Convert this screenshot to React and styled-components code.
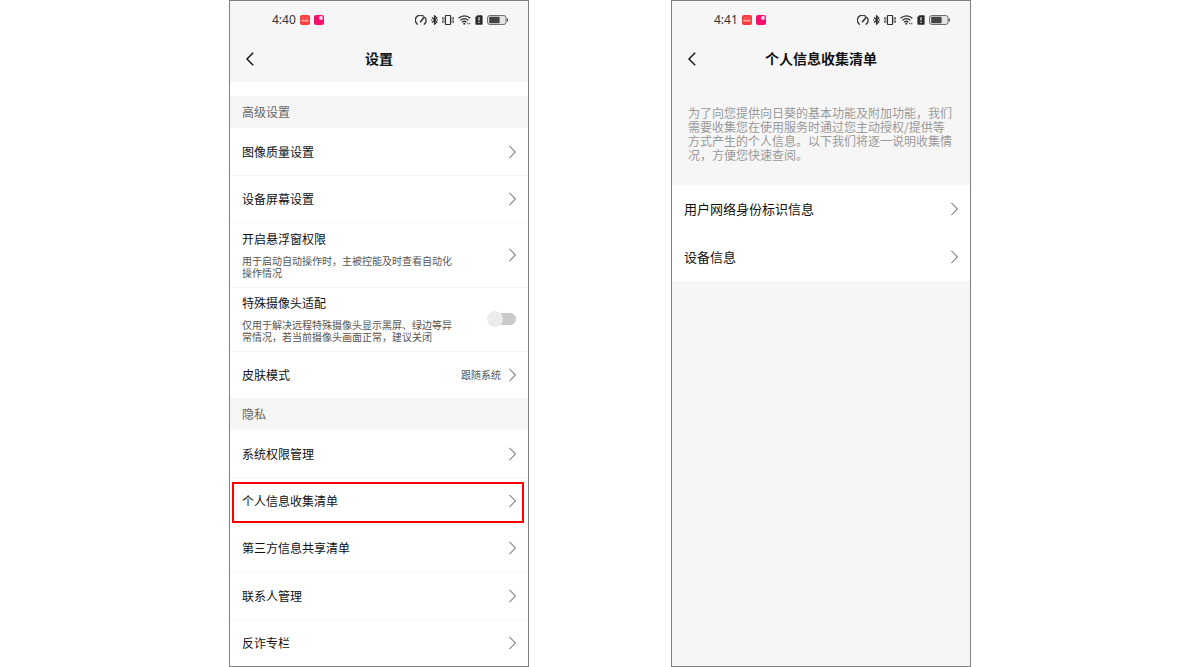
import React, { useState } from "react";
import styled, { createGlobalStyle } from "styled-components";

const advanced = [
  { title: "图像质量设置" },
  { title: "设备屏幕设置" },
  {
    title: "开启悬浮窗权限",
    desc: ["用于启动自动操作时，主被控能及时查看自动化", "操作情况"],
  },
  {
    title: "特殊摄像头适配",
    desc: [
      "仅用于解决远程特殊摄像头显示黑屏、绿边等异",
      "常情况，若当前摄像头画面正常，建议关闭",
    ],
    toggle: true,
  },
  { title: "皮肤模式", value: "跟随系统" },
];

const privacy = [
  { title: "系统权限管理" },
  { title: "个人信息收集清单", marked: true },
  { title: "第三方信息共享清单" },
  { title: "联系人管理" },
  { title: "反诈专栏" },
];

const notice = [
  "为了向您提供向日葵的基本功能及附加功能，我们",
  "需要收集您在使用服务时通过您主动授权/提供等",
  "方式产生的个人信息。以下我们将逐一说明收集情",
  "况，方便您快速查阅。",
];

//icons
const Chevron = () => (
  <svg width="7" height="14" viewBox="0 0 7 14" fill="none" stroke="#8f8f8f">
    <path d="M0.4 0.8 L6.4 7 L0.4 13.2" strokeWidth="1.2" />
  </svg>
);

const BackIcon = () => (
  <svg width="8" height="14" viewBox="0 0 8 14" fill="none" stroke="#111">
    <path d="M7.2 0.8 L1 7 L7.2 13.2" strokeWidth="1.4" />
  </svg>
);

const AppBadges = () => (
  <>
    <svg width="10" height="10" viewBox="0 0 10 10">
      <rect width="10" height="10" rx="2" fill="#fb3a3c" />
      <path d="M2.2 2.8h2M5.6 2.8h2.2" stroke="#fd8a86" strokeWidth="0.8" />
      <path
        d="M1.2 5.7h7.6"
        stroke="#ffc2be"
        strokeWidth="1.8"
        strokeDasharray="1.6 0.3"
      />
    </svg>
    <svg width="10" height="10" viewBox="0 0 10 10">
      <rect width="10" height="10" rx="2" fill="#f5106e" />
      <circle cx="7" cy="2.9" r="1.9" fill="#fff" />
      <circle cx="7" cy="2.8" r="0.7" fill="#f77fae" />
    </svg>
  </>
);

const SystemIcons = () => (
  <>
    <svg width="12" height="10" viewBox="0 0 12 10" fill="none" stroke="#333">
      <path
        d="M2.4 9.2 A4.9 4.9 0 0 1 8.2 1.1 M10.3 2.9 A4.9 4.9 0 0 1 9.2 9.2"
        strokeWidth="1.3"
        strokeLinecap="round"
      />
      <path d="M5.5 6.8 L9.3 2.2" strokeWidth="1.5" strokeLinecap="round" />
    </svg>
    <svg width="7" height="10" viewBox="0 0 7 10" fill="none" stroke="#2b2b2b">
      <path
        d="M1 2.4 L5.8 7.1 L3.5 9.2 V0.8 L5.8 2.9 L1 7.6"
        strokeWidth="1.2"
      />
      <path d="M0 5h1.2M5.8 5h1.2" strokeWidth="1.2" />
    </svg>
    <svg width="12" height="10" viewBox="0 0 12 10" fill="none" stroke="#333">
      <rect x="3.5" y="0.5" width="5" height="9" rx="0.3" strokeWidth="1.1" />
      <path d="M1.9 1.8v6.4M10.1 1.8v6.4" strokeWidth="0.8" />
      <path d="M0.5 2.6v1.6M0.5 5.6v1.8M11.5 2.6v1.6M11.5 5.6v1.8" />
    </svg>
    <svg width="13" height="10" viewBox="0 0 13 10" fill="none" stroke="#333">
      <path
        d="M0.5 3.3 A8.2 8.2 0 0 1 12.3 3.3 M2.4 5.4 A5.4 5.4 0 0 1 10.4 5.4 M4.2 7.4 A3 3 0 0 1 8.4 7.2"
        strokeWidth="1.3"
      />
      <circle cx="6.3" cy="8.8" r="1" fill="#333" stroke="none" />
      <path d="M9 8.6h1.2M10.8 8.6h1.6" stroke="#777" strokeWidth="1.5" />
    </svg>
    <svg width="8" height="10" viewBox="0 0 8 10">
      <path
        d="M2.4 0.2h4.4a.8.8 0 0 1 .8.8v8a.8.8 0 0 1-.8.8h-5.6a.8.8 0 0 1-.8-.8V2.2z"
        fill="#2b2b2b"
      />
      <path d="M4 2.2v3.4M4 6.8v1.3" stroke="#f4f4f4" strokeWidth="1.2" />
    </svg>
    <svg width="21" height="10" viewBox="0 0 21 10">
      <rect
        x="0.5"
        y="0.5"
        width="18.6"
        height="9"
        rx="2.4"
        fill="#e4e4e4"
        stroke="#6d6d6d"
      />
      <rect x="2.2" y="1.8" width="10.4" height="6.4" rx="0.6" fill="#444" />
      <path d="M20.4 3.4v3.2" stroke="#555" strokeWidth="1.2" />
    </svg>
  </>
);

const PhoneTop = ({ time, title }) => {
  return (
    <Header>
      <StatusBar>
        <Time>{time}</Time>
        <Badges>
          <AppBadges />
        </Badges>
        <Signals>
          <SystemIcons />
        </Signals>
      </StatusBar>
      <NavBar>
        <BackButton type="button" aria-label="返回">
          <BackIcon />
        </BackButton>
        <h1>{title}</h1>
      </NavBar>
    </Header>
  );
};

const Body = ({ title, desc }) => (
  <RowBody>
    <RowTitle>{title}</RowTitle>
    {desc && (
      <RowDesc>
        {desc.map((line) => (
          <span key={line}>{line}</span>
        ))}
      </RowDesc>
    )}
  </RowBody>
);

const SettingRow = ({ item }) => {
  const [on, setOn] = useState(false);

  return (
    <Row $tall={!!item.desc}>
      {item.toggle ? (
        <RowLabel>
          <Body title={item.title} desc={item.desc} />
          <Switch
            type="checkbox"
            checked={on}
            onChange={() => setOn(!on)}
          />
        </RowLabel>
      ) : (
        <RowLink href="#">
          <Body title={item.title} desc={item.desc} />
          {item.value && <RowValue>{item.value}</RowValue>}
          <Chevron />
        </RowLink>
      )}
      {item.marked && <Marker />}
    </Row>
  );
};

const App = () => {
  return (
    <>
      <GlobalStyle />
      <Page lang="zh-CN">
        <Phone>
          <PhoneTop time="4:40" title="设置" />
          <Settings>
            <SectionTitle>高级设置</SectionTitle>
            <List>
              {advanced.map((item) => (
                <SettingRow item={item} key={item.title} />
              ))}
            </List>
            <SectionTitle>隐私</SectionTitle>
            <List>
              {privacy.map((item) => (
                <SettingRow item={item} key={item.title} />
              ))}
            </List>
          </Settings>
        </Phone>
        <Phone>
          <PhoneTop time="4:41" title="个人信息收集清单" />
          <Notice>
            {notice.map((line) => (
              <span key={line}>{line}</span>
            ))}
          </Notice>
          <InfoList>
            <li>
              <InfoLink href="#">
                用户网络身份标识信息
                <Chevron />
              </InfoLink>
            </li>
            <li>
              <InfoLink href="#">
                设备信息
                <Chevron />
              </InfoLink>
            </li>
          </InfoList>
        </Phone>
      </Page>
    </>
  );
};

const GlobalStyle = createGlobalStyle`
  * {
    margin: 0;
    padding: 0;
    box-sizing: border-box;
  }
  body {
    background: white;
    font-family: "Noto Sans CJK SC", sans-serif;
  }
  ul {
    list-style: none;
  }
  a {
    color: inherit;
    text-decoration: none;
  }
  svg {
    display: block;
    flex-shrink: 0;
  }
`;
const Page = styled.main`
  min-height: 100vh;
  display: flex;
  justify-content: center;
  gap: 142px;
`;
const Phone = styled.section`
  flex: 0 1 300px;
  display: flex;
  flex-direction: column;
  background: #f6f6f6;
  border: 1px solid #808080;
`;
const Header = styled.header`
  padding-bottom: 3px;
`;
const StatusBar = styled.div`
  height: 38px;
  display: flex;
  align-items: center;
  padding: 0 20px 0 42px;
`;
const Time = styled.span`
  font-family: "Noto Sans", sans-serif;
  font-size: 12px;
  line-height: 16px;
  color: #333;
`;
const Badges = styled.div`
  display: flex;
  gap: 4px;
  margin-left: 4px;
`;
const Signals = styled.div`
  display: flex;
  gap: 4px;
  margin-left: auto;
`;
const NavBar = styled.div`
  height: 40px;
  display: grid;
  grid-template-columns: 1fr auto 1fr;
  align-items: center;
  h1 {
    padding-bottom: 2px;
    font-size: 14px;
    line-height: 20px;
    font-weight: 700;
    color: #111;
  }
`;
const BackButton = styled.button`
  justify-self: start;
  padding: 8px 16px;
  border: none;
  background: none;
  cursor: pointer;
`;
const Settings = styled.div`
  flex: 1;
  display: flex;
  flex-direction: column;
  padding-top: 14px;
  background: white;
`;
const SectionTitle = styled.h2`
  padding: 8px 12px;
  font-size: 12px;
  line-height: 16px;
  font-weight: 400;
  color: #666;
  background: #f6f6f6;
`;
const List = styled.ul`
  flex: 1 0 auto;
  display: flex;
  flex-direction: column;
`;
const Row = styled.li`
  position: relative;
  flex: 1 0 auto;
  min-height: ${({ $tall }) => ($tall ? "64px" : "47px")};
  display: flex;
  & + & {
    border-top: 1px solid #f7f7f7;
  }
`;
const RowLink = styled.a`
  flex: 1;
  display: flex;
  align-items: center;
  gap: 8px;
  padding: 0 12px;
`;
const RowLabel = styled.label`
  flex: 1;
  display: flex;
  align-items: center;
  gap: 8px;
  padding: 0 12px;
`;
const RowBody = styled.span`
  flex: 1;
  display: flex;
  flex-direction: column;
  gap: 8px;
`;
const RowTitle = styled.span`
  font-size: 12px;
  line-height: 16px;
  color: #111;
`;
const RowDesc = styled.span`
  display: flex;
  flex-direction: column;
  font-size: 10px;
  line-height: 12px;
  color: #555;
`;
const RowValue = styled.span`
  font-size: 10px;
  line-height: 12px;
  color: #555;
`;
const Switch = styled.input`
  appearance: none;
  position: relative;
  width: 28px;
  height: 12px;
  border-radius: 6px;
  background: #c9c9c9;
  cursor: pointer;
  &::before {
    content: "";
    position: absolute;
    top: -2px;
    left: -1px;
    width: 16px;
    height: 16px;
    border-radius: 50%;
    background: #ececec;
  }
  &:checked::before {
    left: 13px;
  }
`;
const Marker = styled.span`
  position: absolute;
  inset: 4px 4px 1px 2px;
  border: 2px solid #f00;
  pointer-events: none;
`;
const Notice = styled.p`
  display: flex;
  flex-direction: column;
  padding: 24px 16px 23px;
  font-size: 12px;
  line-height: 14px;
  color: #999;
`;
const InfoList = styled.ul`
  background: white;
`;
const InfoLink = styled.a`
  height: 48px;
  display: flex;
  align-items: center;
  justify-content: space-between;
  padding: 0 12px;
  font-size: 13px;
  line-height: 18px;
  color: #111;
`;

export default App;
